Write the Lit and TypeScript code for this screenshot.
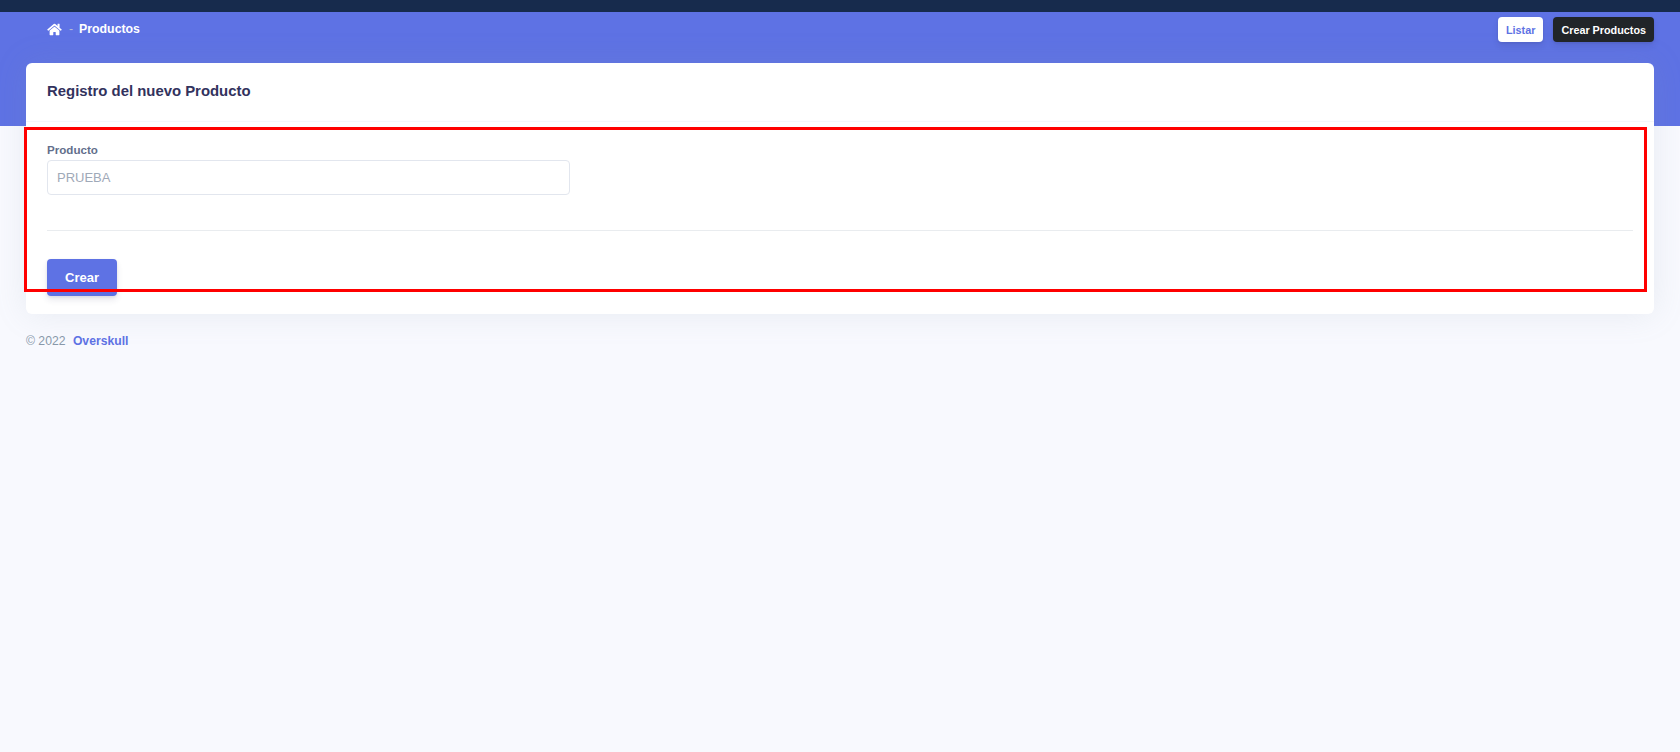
import { LitElement, html, css } from "lit";
import { customElement } from "lit/decorators.js";

@customElement("app-root")
export class AppRoot extends LitElement {
  static styles = css`
    :host { display: block; min-height: 752px; background: #f8f9fe; font-family: "Liberation Sans", Arial, sans-serif; position: relative; }
    .topbar { height: 12px; background: #172b4d; }
    .hero { height: 114px; background: #5e72e4; box-sizing: border-box; padding: 5px 26px 0 47px; display: flex; justify-content: space-between; align-items: flex-start; }
    .crumbs { display: flex; align-items: center; height: 18px; margin-top: 3px; color: #fff; font-size: 12.3px; font-weight: 700; }
    .crumbs svg { width: 15px; height: 13px; fill: #fff; display: block; }
    .sep { color: #b4bdd0; font-weight: 400; margin: 0 6px 0 7px; font-size: 12.3px; }
    .actions { display: flex; gap: 10px; }
    .btn { box-sizing: border-box; height: 25px; padding: 0 8px; border-radius: 4px; font-size: 10.8px; font-weight: 700; display: flex; align-items: center; box-shadow: 0 4px 6px rgba(50,50,93,.11), 0 1px 3px rgba(0,0,0,.08); }
    .btn.white { background: #fff; color: #5e72e4; }
    .btn.dark { background: #212529; color: #fff; }
    .main { margin: -63px 26px 0; }
    .card { background: #fff; border-radius: 6px; box-shadow: 0 0 32px rgba(136,152,170,.15); }
    .card-head { height: 59px; box-sizing: border-box; padding: 19px 21px 0; border-bottom: 1px solid #f6f7fa; }
    h3 { margin: 0; font-size: 14.9px; line-height: 18px; font-weight: 700; color: #32325d; }
    .card-body { box-sizing: border-box; height: 192px; padding: 21px 21px 0; }
    label { display: block; font-size: 11.6px; line-height: 14px; font-weight: 700; color: #525f7f; opacity: .9; margin-bottom: 3px; }
    .input { box-sizing: border-box; width: 523px; height: 35px; border: 1px solid #e2e6ee; border-radius: 4px; padding: 0 9px; display: flex; align-items: center; font-size: 13px; color: #9fa9b8; }
    hr { border: 0; border-top: 1px solid #e9ecef; margin: 35px 0 28px; }
    .submit { box-sizing: border-box; width: 70px; height: 37px; border-radius: 4px; background: #5e72e4; color: #fff; display: flex; align-items: center; justify-content: center; font-size: 13px; font-weight: 700; box-shadow: 0 4px 6px rgba(50,50,93,.11), 0 1px 3px rgba(0,0,0,.08); }
    footer { margin-top: 19px; font-size: 12.2px; line-height: 16px; color: #8898aa; }
    footer b { color: #5e72e4; margin-left: 4px; }
    .mark { position: absolute; left: 24px; top: 127px; width: 1623px; height: 165px; box-sizing: border-box; border: 3px solid #ff0000; pointer-events: none; }
  `;

  render() {
    return html`
      <div class="topbar"></div>
      <div class="hero">
        <div class="crumbs">
          <svg viewBox="0 0 576 512"><path d="M280.37 148.26L96 300.11V464a16 16 0 0 0 16 16l112.06-.29a16 16 0 0 0 15.92-16V368a16 16 0 0 1 16-16h64a16 16 0 0 1 16 16v95.64a16 16 0 0 0 16 16.05L464 480a16 16 0 0 0 16-16V300L295.67 148.26a12.19 12.19 0 0 0-15.3 0zM571.6 251.47L488 182.56V44.05a12 12 0 0 0-12-12h-56a12 12 0 0 0-12 12v72.61L318.47 43a48 48 0 0 0-61 0L4.34 251.47a12 12 0 0 0-1.6 16.9l25.5 31A12 12 0 0 0 45.15 301l235.22-193.74a12.19 12.19 0 0 1 15.3 0L530.9 301a12 12 0 0 0 16.9-1.6l25.5-31a12 12 0 0 0-1.7-16.93z"/></svg>
          <span class="sep">-</span>
          <span>Productos</span>
        </div>
        <div class="actions">
          <div class="btn white">Listar</div>
          <div class="btn dark">Crear Productos</div>
        </div>
      </div>
      <div class="main">
        <div class="card">
          <div class="card-head"><h3>Registro del nuevo Producto</h3></div>
          <div class="card-body">
            <label>Producto</label>
            <div class="input">PRUEBA</div>
            <hr />
            <div class="submit">Crear</div>
          </div>
        </div>
        <footer>© 2022 <b>Overskull</b></footer>
      </div>
      <div class="mark"></div>
    `;
  }
}
